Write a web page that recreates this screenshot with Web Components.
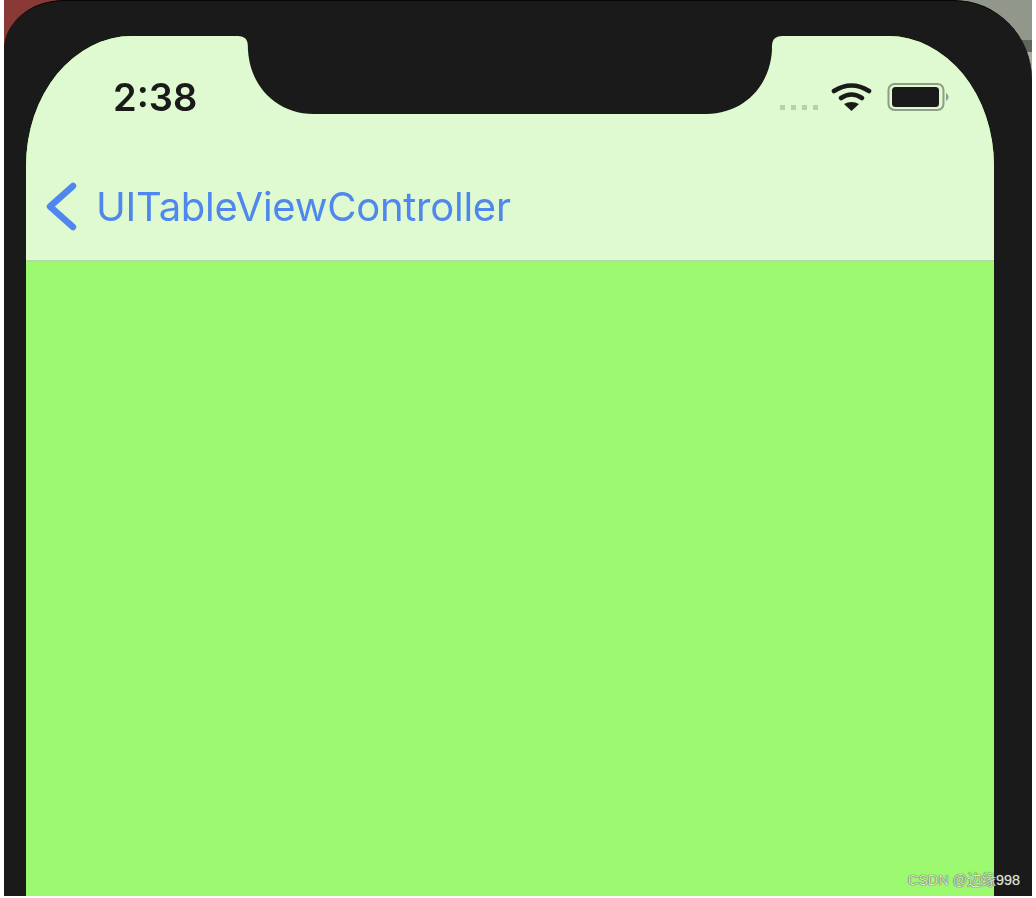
<!doctype html>
<html>
<head>
<meta charset="utf-8">
<style>
  html, body { margin: 0; background: #fff; }
  body { width: 1036px; height: 898px; overflow: hidden; }
</style>
</head>
<body>
<phone-frame>
  <status-bar slot="top" time="2:38"></status-bar>
  <nav-bar slot="top" back="UITableViewController"></nav-bar>
</phone-frame>
<water-mark>CSDN @边缘998</water-mark>

<script>
const frameTemplate = document.createElement('template');
frameTemplate.innerHTML = `
  <style>
    :host {
      display: block;
      width: 1028px;
      height: 896px;
      margin-left: 4px;
      background:
        linear-gradient(#8a3a36, #8a3a36) left top / 70px 60px no-repeat,
        linear-gradient(180deg, #92978b 0 40px, #5f665c 40px 52px, #a6ac9e 52px 90px) right top / 90px 90px no-repeat,
        #fff;
    }
    #body {
      box-sizing: border-box;
      height: 100%;
      padding: 36px 38px 0 22px;
      background: #1a1a1a;
      border-top: 1px solid #050505;
      border-radius: 60px 78px 0 0 / 50px 80px 0 0;
      display: flex;
    }
    #screen {
      flex: 1;
      display: flex;
      flex-direction: column;
      margin-top: -1px;
      background: #9df96f;
      border-radius: 106px 106px 0 0 / 130px 130px 0 0;
      overflow: hidden;
    }
    #top {
      display: flex;
      flex-direction: column;
      height: 224px;
      background: #dffad0;
      border-bottom: 2px solid #b9d8aa;
    }
  </style>
  <div id="body">
    <div id="screen">
      <div id="top"><slot name="top"></slot></div>
      <slot></slot>
    </div>
  </div>
`;

class PhoneFrame extends HTMLElement {
  connectedCallback() {
    if (this.shadowRoot) return;
    this.attachShadow({ mode: 'open' }).append(frameTemplate.content.cloneNode(true));
  }
}

const statusTemplate = document.createElement('template');
statusTemplate.innerHTML = `
  <style>
    :host {
      display: flex;
      position: relative;
      box-sizing: border-box;
      height: 126px;
      padding: 0 45px 0 87px;
      align-items: flex-start;
      justify-content: space-between;
    }
    #time {
      margin-top: 38px;
      font: 600 38px/46px Inter, "Liberation Sans", sans-serif;
      color: #1a1a1a;
      filter: blur(0.7px);
    }
    #notch {
      position: absolute;
      left: 210px;
      top: 0;
      filter: blur(0.4px);
    }
    #icons {
      display: flex;
      align-items: flex-start;
      margin-top: 46px;
      filter: blur(0.6px);
    }
    #signal {
      display: flex;
      gap: 6px;
      margin: 23px 13px 0 0;
    }
    #signal i {
      width: 5px;
      height: 5px;
      background: #b3d2a5;
    }
    #wifi { margin-right: 14px; }
  </style>
  <span id="time"></span>
  <svg id="notch" width="548" height="78" viewBox="0 0 548 78">
    <path fill="#1a1a1a" d="M0 0H548C536 0 536 6 536 14C534 50 508 78 470 78H78C40 78 14 50 12 14C12 6 12 0 0 0Z"/>
  </svg>
  <div id="icons">
    <div id="signal"><i></i><i></i><i></i><i></i></div>
    <svg id="wifi" width="42" height="30" viewBox="0 0 42 30">
      <g fill="none" stroke="#1a1a1a" stroke-width="4.6" stroke-linecap="round">
        <path d="M3 9Q20.5 -2 38 9"/>
        <path d="M10 16Q20.5 9 31 16"/>
      </g>
      <path fill="#1a1a1a" d="M13 22Q20.5 18 28 22L20.5 29Z"/>
    </svg>
    <svg width="62" height="30" viewBox="0 0 62 30">
      <rect x="1.5" y="2" width="55" height="26" rx="6" fill="none" stroke="#8f9c88" stroke-width="2"/>
      <rect x="5" y="5" width="47" height="20" rx="3.5" fill="#1a1a1a"/>
      <path fill="#8f9c88" d="M59 11C61 12 61.5 14 61.5 15S61 18 59 19Z"/>
    </svg>
  </div>
`;

class StatusBar extends HTMLElement {
  connectedCallback() {
    if (this.shadowRoot) return;
    const shadow = this.attachShadow({ mode: 'open' });
    shadow.append(statusTemplate.content.cloneNode(true));
    shadow.querySelector('#time').textContent = this.getAttribute('time') ?? '';
  }
}

const navTemplate = document.createElement('template');
navTemplate.innerHTML = `
  <style>
    :host {
      display: flex;
      align-items: center;
      gap: 16px;
      height: 90px;
      padding: 0 0 0 20px;
      color: #5087ee;
    }
    svg { flex: none; filter: blur(0.5px); }
    #label {
      font: 400 40px/48px Inter, "Liberation Sans", sans-serif;
      letter-spacing: -0.25px;
      filter: blur(0.7px);
      white-space: nowrap;
    }
  </style>
  <svg width="34" height="50" viewBox="0 0 34 50">
    <path d="M27 4L4 24.5L27 45" fill="none" stroke="currentColor" stroke-width="6.4" stroke-linecap="round" stroke-linejoin="round"/>
  </svg>
  <span id="label"></span>
`;

class NavBar extends HTMLElement {
  connectedCallback() {
    if (this.shadowRoot) return;
    const shadow = this.attachShadow({ mode: 'open' });
    shadow.append(navTemplate.content.cloneNode(true));
    shadow.querySelector('#label').textContent = this.getAttribute('back') ?? '';
  }
}

class WaterMark extends HTMLElement {
  connectedCallback() {
    if (this.shadowRoot) return;
    this.attachShadow({ mode: 'open' }).innerHTML = `
      <style>
        :host {
          position: absolute;
          right: 16px;
          top: 871px;
          font: 14.4px/18px "Liberation Sans", "Noto Sans CJK SC", sans-serif;
          color: #dfe3da;
          text-shadow: 0 0 1px #444, 0 0 1px #666;
          white-space: nowrap;
        }
      </style>
      <slot></slot>
    `;
  }
}

customElements.define('phone-frame', PhoneFrame);
customElements.define('status-bar', StatusBar);
customElements.define('nav-bar', NavBar);
customElements.define('water-mark', WaterMark);
</script>
</body>
</html>
